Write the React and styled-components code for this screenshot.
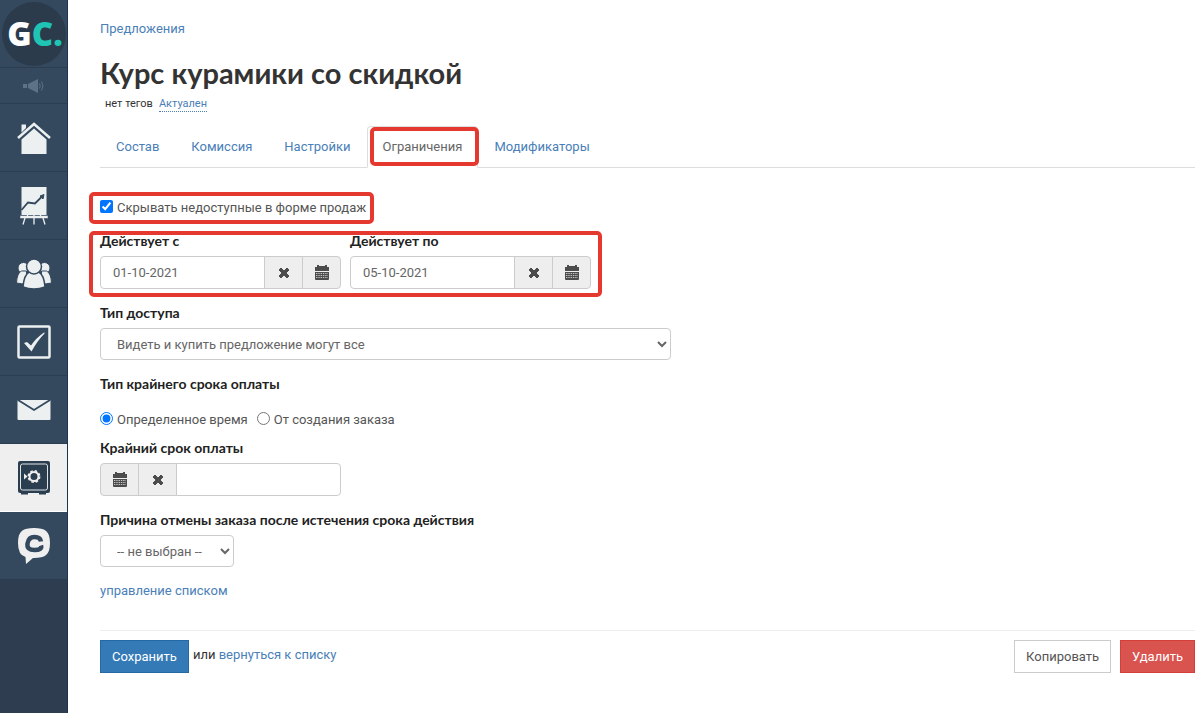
import { useState } from 'react';
import styled, { createGlobalStyle, css } from 'styled-components'

const GlobalStyle = createGlobalStyle`
  * {
    box-sizing: border-box;
  }

  body {
    margin: 0;
    background-color: #fff;
    color: #333;
    font-family: Roboto, "Open Sans", sans-serif;
    font-size: 13px;
    line-height: 20px;
  }

  a {
    color: #4a80b8;
    text-decoration: none;
  }
`;

const Page = styled.div`
  display: flex;
  min-height: 100vh;
`;

const SidebarStyled = styled.nav`
  flex: none;
  width: 68px;
  background-color: #2e3e50;
  border-right: 1px solid #1d3450;
`;

const SidebarItem = styled.a`
  display: flex;
  align-items: center;
  justify-content: center;
  height: ${({ $small }) => ($small ? '36px' : '68px')};
  background-color: ${({ $active }) => ($active ? '#efefef' : '#34495e')};
  border-bottom: 1px solid ${({ $active }) => ($active ? '#fff' : '#2b3d50')};
`;

const Logo = styled.span`
  display: flex;
  align-items: center;
  justify-content: center;
  width: 64px;
  height: 64px;
  padding-left: 3px;
  border-radius: 50%;
  background-color: #2b3b4c;
  color: #fff;
  font-family: "Open Sans", sans-serif;
  font-size: 33px;
  font-weight: 800;

  span {
    color: #1fc4b4;
  }
`;

const Main = styled.main`
  flex: 1;
  min-width: 0;
  padding: 19px 5px 40px 32px;
`;

const Title = styled.h1`
  margin: 16px 0 5px;
  font-family: Lato, sans-serif;
  font-size: 29px;
  font-weight: 700;
  line-height: 36px;
`;

const Tags = styled.div`
  display: flex;
  gap: 6px;
  padding-left: 5px;
  font-size: 11px;
  line-height: 15px;

  a {
    border-bottom: 1px dotted #4a80b8;
  }
`;

const Tabs = styled.div`
  display: flex;
  margin-top: 14px;
  border-bottom: 1px solid #ddd;
`;

const Tab = styled.a`
  position: relative;
  margin-bottom: -1px;
  padding: 10px 15px;
  border: 1px solid transparent;
  border-radius: 4px 4px 0 0;

  ${({ $active }) => $active && css`
    color: #666;
    background-color: #fff;
    border-color: #ddd #ddd #fff;
  `}
`;

// red frame drawn around the thing the reader should look at
const Highlight = styled.span`
  position: absolute;
  inset: ${({ $inset }) => $inset};
  border: 4px solid #e5382f;
  border-radius: 5px;
  pointer-events: none;
`;

const Framed = styled.div`
  position: relative;
  width: fit-content;
`;

const Form = styled.form`
  padding-top: 30px;
`;

const Choices = styled.div`
  display: flex;
  gap: 9px;
  margin: 16px 0 8px;
`;

const Choice = styled.label`
  display: flex;
  gap: 4px;
  color: #555;

  input {
    width: 13px;
    height: 13px;
    margin: 2px 0 0;
  }
`;

const Dates = styled.div`
  display: flex;
  gap: 9px;
  margin: 13px 0 14px;
`;

const Field = styled.div`
  margin-bottom: 14px;
`;

const Label = styled.label`
  display: block;
  margin-bottom: 5px;
  color: #222;
  font-family: Lato, sans-serif;
  font-size: 14px;
  font-weight: 700;
`;

const controlStyle = css`
  border: 1px solid #ccc;
  border-radius: 4px;
  background-color: #fff;
  color: #666;
  font: inherit;
`;

const Select = styled.select`
  ${controlStyle}
  display: block;
  width: 100%;
  max-width: ${({ $width }) => $width};
  height: 32px;
  padding: 0 12px;
`;

const InputGroup = styled.div`
  display: flex;
  width: 241px;
  height: 33px;

  > * + * {
    margin-left: -1px;
  }
  > :not(:first-child) {
    border-top-left-radius: 0;
    border-bottom-left-radius: 0;
  }
  > :not(:last-child) {
    border-top-right-radius: 0;
    border-bottom-right-radius: 0;
  }
`;

const Input = styled.input`
  ${controlStyle}
  flex: 1;
  min-width: 0;
  padding: 0 12px;
`;

const Addon = styled.button`
  ${controlStyle}
  display: flex;
  align-items: center;
  justify-content: center;
  width: 39px;
  padding: 0;
  background-color: #eee;
  color: #4c4c4c;
`;

const Footer = styled.div`
  display: flex;
  gap: 9px;
  margin-top: 29px;
  padding-top: 9px;
  border-top: 1px solid #eee;
`;

const SaveGroup = styled.div`
  display: flex;
  gap: 4px;
  margin-right: auto;

  p {
    margin: 5px 0 0;
  }
`;

const buttonColors = {
  primary: css`
    background-color: #337ab7;
    border-color: #2468a4;
    color: #fff;
  `,
  danger: css`
    background-color: #d9534f;
    border-color: #d43f3a;
    color: #fff;
  `,
  plain: css`
    background-color: #fff;
    border-color: #ccc;
    color: #555;
  `,
};

const Button = styled.button`
  height: 33px;
  padding: 0 11px;
  border: 1px solid;
  font: inherit;
  ${({ $kind }) => buttonColors[$kind]}
`;

function MegaphoneIcon() {
  return (
    <svg width="22" height="14" viewBox="0 0 22 14" fill="#5d7287">
      <path d="M0 5h4v4H0zM5 5l10-5v14L5 9z" />
      <path d="M16.500 4.500q1.500 2.500 0 5M18.500 2.500q3 4.500 0 9" fill="none" stroke="#5d7287" />
    </svg>
  );
}

function HomeIcon() {
  return (
    <svg width="34" height="32" viewBox="0 0 34 32" fill="#ecf0f1">
      <path d="M4.500 2.500h4.500v3.500l-4.500 4.500z" />
      <path d="M1 16L17 2l16 14" fill="none" stroke="#ecf0f1" strokeWidth="2.500" />
      <path d="M17 6.500L29.500 17.500V32h-25V17.500z" />
    </svg>
  );
}

function ChartIcon() {
  return (
    <svg width="28" height="38" viewBox="0 0 28 38">
      <path d="M1.500 0h25v28h-25z" fill="#ecf0f1" />
      <path d="M1.500 23l6.500-7.500 7 1 7-7" fill="none" stroke="#34495e" strokeWidth="1.800" />
      <path d="M20 9l4-1.500-1 4.500z" fill="#34495e" stroke="#34495e" />
      <path d="M0 28.500h28v3H0z" fill="#ecf0f1" stroke="#34495e" strokeWidth="0.500" />
      <path d="M5 31l-2 6.500M14 31v6.500M23 31l2 6.500M7.500 28v2M14 28v2M20.500 28v2" stroke="#ecf0f1" strokeWidth="1.300" />
    </svg>
  );
}

function UsersIcon() {
  return (
    <svg width="36" height="30" viewBox="0 0 36 30" fill="#ecf0f1" stroke="#34495e">
      <circle cx="7.500" cy="9" r="5.500" />
      <circle cx="28.500" cy="9" r="5.500" />
      <path d="M.500 24q.500-10 5-12h5v13q-5 0-10-1zM35.500 24q-.500-10-5-12h-5v13q5 0 10-1z" />
      <path d="M7 28q1-12 6-15h10q5 3 6 15-11 4-22 0z" strokeWidth="1.500" />
      <circle cx="18" cy="7.500" r="7.500" strokeWidth="1.500" />
    </svg>
  );
}

function TaskIcon() {
  return (
    <svg width="34" height="34" viewBox="0 0 34 34">
      <rect x="1.500" y="1.500" width="31" height="31" rx="1" fill="none" stroke="#ecf0f1" strokeWidth="2.500" />
      <path d="M7 18l3-1 4 3.500Q19 13 27 7.500q1 0 .500 1-7 7-13 18z" fill="#ecf0f1" />
    </svg>
  );
}

function MailIcon() {
  return (
    <svg width="34" height="20" viewBox="0 0 34 20">
      <rect x=".500" width="33" height="20" rx="1" fill="#ecf0f1" />
      <path d="M1 0l16 10L33 0" fill="none" stroke="#34495e" strokeWidth="1.800" />
    </svg>
  );
}

function SafeIcon() {
  return (
    <svg width="34" height="34" viewBox="0 0 34 34">
      <path d="M4 31h7v2.500H4zM22 31h7v2.500h-7z" fill="#2b3e50" />
      <rect x="1" y="0" width="32" height="32" rx="2" fill="#2b3e50" />
      <rect x="3.500" y="3" width="27" height="26" rx="2" fill="none" stroke="#dfe3e6" />
      <path d="M7 12.500l3.500 3-3.500 3z" fill="#efefef" />
      <circle cx="17" cy="15.500" r="4.500" fill="none" stroke="#efefef" strokeWidth="2" />
      <circle cx="17" cy="15.500" r="5.700" fill="none" stroke="#efefef" strokeWidth="1.500" strokeDasharray="2.500 1.980" />
    </svg>
  );
}

function ChatIcon() {
  return (
    <svg width="34" height="38" viewBox="0 0 34 38">
      <path d="M17 1C28 1 33 4 33 16S28 31 17 31h-1l-7 6-.500-7Q1 28 1 16C1 4 6 1 17 1z" fill="#efefef" />
      <path d="M24 14.500q-.500-4.500-6.500-4.500T10.500 16.500 17.500 23 24 18.500" fill="none" stroke="#34495e" strokeWidth="4.500" />
    </svg>
  );
}

function CrossIcon() {
  return (
    <svg width="12" height="12" viewBox="0 0 12 12" fill="currentColor" stroke="currentColor" strokeLinejoin="round">
      <path d="M3 1L6 4l3-3 2 2-3 3 3 3-2 2-3-3-3 3-2-2 3-3-3-3z" />
    </svg>
  );
}

function CalendarIcon() {
  return (
    <svg width="14" height="15" viewBox="0 0 14 15">
      <path d="M0 2h2V0h2v1h6V0h2v2h2v4H0zM0 7h14v7q0 1-1 1H1q-1 0-1-1z" fill="#4c4c4c" />
      <path d="M1 8.500h12M1 10.500h12M1 12.500h12" stroke="#c4c4c4" strokeDasharray="1.400 0.900" />
    </svg>
  );
}

const menu = [
  { name: 'Главная', icon: <HomeIcon /> },
  { name: 'Статистика', icon: <ChartIcon /> },
  { name: 'Ученики', icon: <UsersIcon /> },
  { name: 'Задачи', icon: <TaskIcon /> },
  { name: 'Сообщения', icon: <MailIcon /> },
  { name: 'Продажи', icon: <SafeIcon />, active: true },
  { name: 'Чатиум', icon: <ChatIcon /> },
];

const tabs = ['Состав', 'Комиссия', 'Настройки', 'Ограничения', 'Модификаторы'];

function Sidebar() {
  return (
    <SidebarStyled>
      <SidebarItem href="#" aria-label="GetCourse">
        <Logo>G<span>C.</span></Logo>
      </SidebarItem>
      <SidebarItem href="#" aria-label="Новости" $small>
        <MegaphoneIcon />
      </SidebarItem>
      {menu.map(({ name, icon, active }) => (
        <SidebarItem key={name} href="#" aria-label={name} $active={active}>
          {icon}
        </SidebarItem>
      ))}
    </SidebarStyled>
  );
}

function ClearButton({ onClick }) {
  return <Addon type="button" aria-label="Очистить" onClick={onClick}><CrossIcon /></Addon>;
}

function CalendarButton() {
  return <Addon type="button" aria-label="Выбрать дату"><CalendarIcon /></Addon>;
}

function DateField({ id, label, initial }) {
  const [value, setValue] = useState(initial);

  return (
    <div>
      <Label htmlFor={id}>{label}</Label>
      <InputGroup>
        <Input id={id} value={value} onChange={(e) => setValue(e.target.value)} />
        <ClearButton onClick={() => setValue('')} />
        <CalendarButton />
      </InputGroup>
    </div>
  );
}

function App() {
  const [deadline, setDeadline] = useState('');

  return (
    <Page>
      <GlobalStyle />
      <Sidebar />
      <Main>
        <a href="#">Предложения</a>
        <Title>Курс курамики со скидкой</Title>
        <Tags>
          <span>нет тегов</span>
          <a href="#">Актуален</a>
        </Tags>
        <Tabs>
          {tabs.map((tab) => (
            <Tab key={tab} href="#" $active={tab === 'Ограничения'}>
              {tab}
              {tab === 'Ограничения' && <Highlight $inset="0 -2px 1px 2px" />}
            </Tab>
          ))}
        </Tabs>
        <Form onSubmit={(e) => e.preventDefault()}>
          <Framed>
            <Choice>
              <input type="checkbox" defaultChecked />
              Скрывать недоступные в форме продаж
            </Choice>
            <Highlight $inset="-6px -8px -6px -11px" />
          </Framed>
          <Framed>
            <Dates>
              <DateField id="from" label="Действует с" initial="01-10-2021" />
              <DateField id="to" label="Действует по" initial="05-10-2021" />
            </Dates>
            <Highlight $inset="0 -11px -8px -11px" />
          </Framed>
          <Field>
            <Label htmlFor="access">Тип доступа</Label>
            <Select id="access" $width="571px">
              <option>Видеть и купить предложение могут все</option>
            </Select>
          </Field>
          <Label as="div" id="deadline-type">Тип крайнего срока оплаты</Label>
          <Choices role="radiogroup" aria-labelledby="deadline-type">
            <Choice>
              <input type="radio" name="deadlineType" defaultChecked />
              Определенное время
            </Choice>
            <Choice>
              <input type="radio" name="deadlineType" />
              От создания заказа
            </Choice>
          </Choices>
          <Field>
            <Label htmlFor="deadline">Крайний срок оплаты</Label>
            <InputGroup>
              <CalendarButton />
              <ClearButton onClick={() => setDeadline('')} />
              <Input id="deadline" value={deadline} onChange={(e) => setDeadline(e.target.value)} />
            </InputGroup>
          </Field>
          <Field>
            <Label htmlFor="reason">Причина отмены заказа после истечения срока действия</Label>
            <Select id="reason" $width="134px">
              <option>-- не выбран --</option>
            </Select>
          </Field>
          <a href="#">управление списком</a>
          <Footer>
            <SaveGroup>
              <Button $kind="primary">Сохранить</Button>
              <p>или <a href="#">вернуться к списку</a></p>
            </SaveGroup>
            <Button type="button" $kind="plain">Копировать</Button>
            <Button type="button" $kind="danger">Удалить</Button>
          </Footer>
        </Form>
      </Main>
    </Page>
  );
}

export default App
